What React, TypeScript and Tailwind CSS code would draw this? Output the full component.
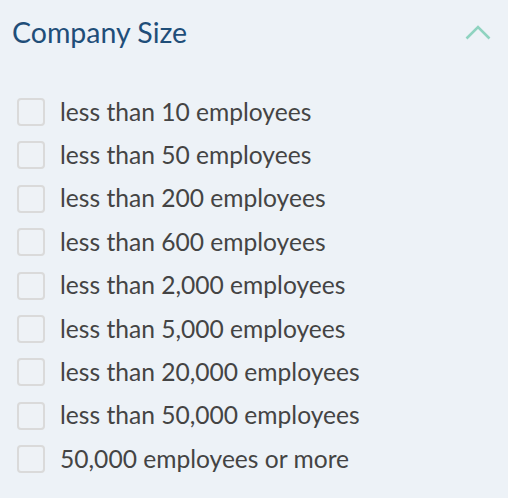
import React from "react";

const items = [
  "less than 10 employees",
  "less than 50 employees",
  "less than 200 employees",
  "less than 600 employees",
  "less than 2,000 employees",
  "less than 5,000 employees",
  "less than 20,000 employees",
  "less than 50,000 employees",
  "50,000 employees or more",
];

export default function App() {
  return (
    <div
      className="w-[508px] h-[498px] bg-[#edf2f7] overflow-hidden"
      style={{ fontFamily: "Lato, 'Liberation Sans', sans-serif" }}
    >
      <div className="flex items-center justify-between pl-[12px] pr-[17px] pt-[12px] h-[52px]">
        <span className="text-[28.5px] leading-none text-[#1f4e79]">Company Size</span>
        <svg width="26" height="16" viewBox="0 0 26 16" fill="none">
          <path d="M1.5 14.5 L13 3 L24.5 14.5" stroke="#8fd3c0" strokeWidth="2.6" />
        </svg>
      </div>
      <div className="flex flex-col pt-[46px] pl-[17px] gap-[15.4px]">
        {items.map((t) => (
          <label key={t} className="flex items-center h-[28px] gap-[15px]">
            <span className="w-[28px] h-[28px] rounded-[4px] border-2 border-[#dadada] bg-[#eef2f6] shrink-0" />
            <span className="text-[24.6px] leading-none text-[#444444]">{t}</span>
          </label>
        ))}
      </div>
    </div>
  );
}
